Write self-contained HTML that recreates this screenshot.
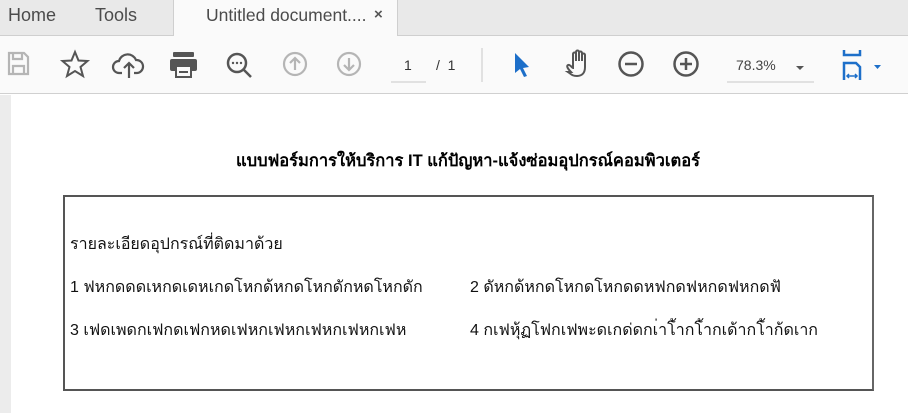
<!DOCTYPE html>
<html><head><meta charset="utf-8"><style>
*{margin:0;padding:0;box-sizing:border-box}
body{width:908px;height:413px;overflow:hidden;background:#fff;font-family:"Liberation Sans","DejaVu Sans",sans-serif;position:relative}
.tabs{position:absolute;left:0;top:0;width:908px;height:36px;background:#e9e9e9;border-bottom:1px solid #cfcfcf}
.t{position:absolute;top:5px;font-size:18px;color:#4b4b4b}
.act{position:absolute;left:173px;top:0;width:225px;height:37px;background:#fafafa;border-left:1px solid #cfcfcf;border-right:1px solid #cfcfcf}
.bar{position:absolute;left:0;top:36px;width:908px;height:58px;background:#fafafa;border-bottom:1px solid #d0d0d0}
.ic{position:absolute}
.side{position:absolute;left:0;top:95px;width:11px;height:318px;background:#ececec}
.title{position:absolute;left:0;width:936px;top:148px;text-align:center;font-weight:bold;font-size:16.5px;color:#000}
.box{position:absolute;left:63px;top:195px;width:811px;height:196px;border:2px solid #555;border-right-color:#666}
.l{position:absolute;font-size:16px;color:#111;white-space:nowrap}
</style></head><body>
<div class="tabs">
<div class="t" style="left:8px">Home</div>
<div class="t" style="left:95px">Tools</div>
<div class="act"><div class="t" style="left:32px;font-size:17.5px">Untitled document....</div><div class="t" style="left:200px;top:6px;font-size:15px;font-weight:bold;color:#555">×</div></div>
</div>
<div class="bar">
<svg class="ic" style="left:0;top:0" width="908" height="58" fill="none" stroke-width="2.2">
<g stroke="#b5b5b5"><path d="M9 17h15l4 4v17H9z M13 17v6h9v-6 M13 38v-8h11v8"/></g>
<path stroke="#555" stroke-width="2" d="M75 16l3.5 8.5 9 .5-7 6 2.5 9-8-5-8 5 2.5-9-7-6 9-.5z"/>
<path stroke="#555" d="M122 37h-3a6 6 0 0 1 0-12 9 9 0 0 1 17-1 6.5 6.5 0 0 1 1 13h-3 M129 42V28 M124 32l5-5 5 5"/>
<g fill="#555" stroke="none"><rect x="173" y="16" width="21" height="5" rx="1"/><rect x="170" y="23" width="27" height="12" rx="2"/><rect x="176" y="30" width="15" height="11" fill="#fafafa" stroke="#555" stroke-width="2"/><rect x="179" y="35" width="9" height="2"/></g>
<g stroke="#555" stroke-width="2.5"><circle cx="237" cy="27" r="9"/><path d="M244 34l7 7"/></g>
<g fill="#555"><circle cx="233" cy="27" r="1.2"/><circle cx="237" cy="27" r="1.2"/><circle cx="241" cy="27" r="1.2"/></g>
<g stroke="#b5b5b5"><circle cx="295" cy="28" r="11"/><path d="M295 34V22 M290 27l5-5 5 5"/><circle cx="349" cy="28" r="11"/><path d="M349 22v12 M344 29l5 5 5-5"/></g>
<path stroke="#c8c8c8" stroke-width="1" d="M391 46h35 M482 12v34 M727 46h87"/>
<path fill="#1d6fc9" stroke="none" d="M515 17l0 20 5-4 4 8 3-1-4-8 6-1z"/>
<path stroke="#555" stroke-width="2" d="M571 36c-3-3-5-6-3-7 2-1 4 3 5 3V18c0-2 3-2 3 0v7-9c0-2 3-2 3 0v9-8c0-2 3-2 3 0v8-6c0-2 3-2 3 0v12c0 6-3 9-8 9s-6-2-9-4z"/>
<g stroke="#555" stroke-width="2.5"><circle cx="631" cy="28" r="11.5"/><path d="M625 28h12"/><circle cx="686" cy="28" r="11.5"/><path d="M680 28h12 M686 22v12"/></g>
<path fill="#555" stroke="none" d="M796 30h8l-4 4z"/>
<g stroke="#1d6fc9" stroke-width="2.5"><path d="M844 14v5h16v-5 M844 44V27h12l4 4v13"/><path stroke-width="1.5" d="M847 40h10 M849 38l-2 2 2 2 M855 38l2 2-2 2"/></g>
<path fill="#1d6fc9" stroke="none" d="M874 29h7l-3.5 4z"/>
</svg>
<div class="l" style="left:404px;top:21px;font-size:14px;color:#333">1</div>
<div class="l" style="left:436px;top:21px;font-size:14px;color:#333">/&nbsp;&nbsp;1</div>
<div class="l" style="left:736px;top:21px;font-size:14px;color:#444">78.3%</div>
</div>
<div class="side"></div>
<div class="title">แบบฟอร์มการให้บริการ IT แก้ปัญหา-แจ้งซ่อมอุปกรณ์คอมพิวเตอร์</div>
<div class="box"></div>
<div class="l" style="left:70px;top:232px">รายละเอียดอุปกรณ์ที่ติดมาด้วย</div>
<div class="l" style="left:70px;top:275px">1 ฟหกดดดเหกดเดหเกดโหกด้หกดโหกดักหดโหกดัก</div>
<div class="l" style="left:470px;top:275px">2 ดัหกด้หกดโหกดโหกดดหฟกดฟหกดฟหกดฟั</div>
<div class="l" style="left:70px;top:318px">3 เฟดเพดกเฟกดเฟกหดเฟหกเฟหกเฟหกเฟหกเฟห</div>
<div class="l" style="left:470px;top:318px">4 กเฟหุ้ฏโฟกเฟพะดเกด่ดกเ่าโ้ากโ้ากเด้ากโ้าก้ดเาก</div>
</body></html>
